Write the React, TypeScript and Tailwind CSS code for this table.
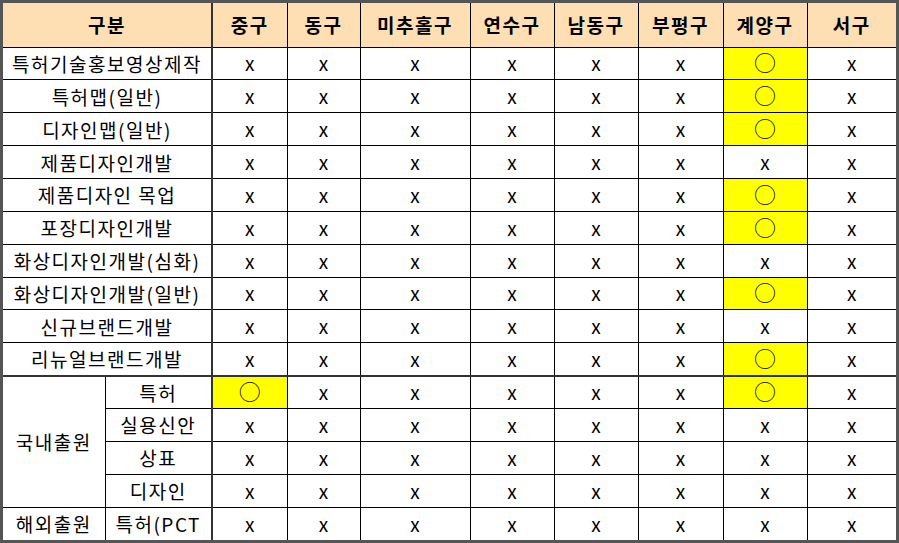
import React from 'react';

type Mark = 'x' | 'o';

const districts = ['중구', '동구', '미추홀구', '연수구', '남동구', '부평구', '계양구', '서구'];

// index 6 = 계양구
const rows: { label: string; marks: Mark[] }[] = [
  { label: '특허기술홍보영상제작', marks: ['x', 'x', 'x', 'x', 'x', 'x', 'o', 'x'] },
  { label: '특허맵(일반)', marks: ['x', 'x', 'x', 'x', 'x', 'x', 'o', 'x'] },
  { label: '디자인맵(일반)', marks: ['x', 'x', 'x', 'x', 'x', 'x', 'o', 'x'] },
  { label: '제품디자인개발', marks: ['x', 'x', 'x', 'x', 'x', 'x', 'x', 'x'] },
  { label: '제품디자인 목업', marks: ['x', 'x', 'x', 'x', 'x', 'x', 'o', 'x'] },
  { label: '포장디자인개발', marks: ['x', 'x', 'x', 'x', 'x', 'x', 'o', 'x'] },
  { label: '화상디자인개발(심화)', marks: ['x', 'x', 'x', 'x', 'x', 'x', 'x', 'x'] },
  { label: '화상디자인개발(일반)', marks: ['x', 'x', 'x', 'x', 'x', 'x', 'o', 'x'] },
  { label: '신규브랜드개발', marks: ['x', 'x', 'x', 'x', 'x', 'x', 'x', 'x'] },
  { label: '리뉴얼브랜드개발', marks: ['x', 'x', 'x', 'x', 'x', 'x', 'o', 'x'] },
];

const filing: { group?: string; span?: number; label: string; marks: Mark[] }[] = [
  { group: '국내출원', span: 4, label: '특허', marks: ['o', 'x', 'x', 'x', 'x', 'x', 'o', 'x'] },
  { label: '실용신안', marks: ['x', 'x', 'x', 'x', 'x', 'x', 'x', 'x'] },
  { label: '상표', marks: ['x', 'x', 'x', 'x', 'x', 'x', 'x', 'x'] },
  { label: '디자인', marks: ['x', 'x', 'x', 'x', 'x', 'x', 'x', 'x'] },
  { group: '해외출원', span: 1, label: '특허(PCT', marks: ['x', 'x', 'x', 'x', 'x', 'x', 'x', 'x'] },
];

function MarkCell({ mark, first }: { mark: Mark; first?: boolean }) {
  const edge = first ? 'border-l-2 border-l-[#333]' : '';
  if (mark === 'o') {
    return (
      <td className={`border border-black bg-[#ffff00] text-center align-middle p-0 ${edge}`}>
        <span className="text-[22px] leading-none font-light">○</span>
      </td>
    );
  }
  return (
    <td className={`border border-black text-center align-bottom p-0 pb-[3px] ${edge}`}>
      <span className="text-[19px] leading-none">x</span>
    </td>
  );
}

const label = 'border border-black text-center text-[19px] tracking-[1.5px] leading-none p-0 whitespace-nowrap overflow-hidden';

export default function App() {
  return (
    <div className="w-[899px] h-[543px] bg-white">
      <div
        className="w-[899px] h-[543px] border-[3px] border-[#555] bg-white text-black"
        style={{ fontFamily: '"Noto Sans CJK KR", "Noto Sans", sans-serif' }}
      >
        <table className="w-full h-full table-fixed border-collapse border-hidden">
          <colgroup>
            <col className="w-[102px]" />
            <col className="w-[107px]" />
            <col className="w-[75px]" />
            <col className="w-[73px]" />
            <col className="w-[110px]" />
            <col className="w-[84px]" />
            <col className="w-[84px]" />
            <col className="w-[85px]" />
            <col className="w-[84px]" />
            <col className="w-[89px]" />
          </colgroup>
          <thead>
            <tr className="h-[44px] bg-[#fedfb4]">
              <th colSpan={2} className="border border-black text-[19px] tracking-[1.5px] font-bold text-center p-0">
                구분
              </th>
              {districts.map((d, i) => (
                <th
                  key={d}
                  className={`border border-black text-[19px] tracking-[1.5px] font-bold text-center p-0 ${i === 0 ? 'border-l-2 border-l-[#333]' : ''}`}
                >
                  {d}
                </th>
              ))}
            </tr>
          </thead>
          <tbody>
            {rows.map((r) => (
              <tr key={r.label} className="h-[32.8px]">
                <td colSpan={2} className={label}>
                  {r.label}
                </td>
                {r.marks.map((m, i) => (
                  <MarkCell key={i} mark={m} first={i === 0} />
                ))}
              </tr>
            ))}
            {filing.map((r, idx) => (
              <tr
                key={r.label}
                className={`h-[32.8px] ${idx === 0 ? '[&>td]:border-t-2 [&>td]:border-t-[#333]' : ''}`}
              >
                {r.group && (
                  <td rowSpan={r.span} className={label}>
                    {r.group}
                  </td>
                )}
                <td className={label}>{r.label}</td>
                {r.marks.map((m, i) => (
                  <MarkCell key={i} mark={m} first={i === 0} />
                ))}
              </tr>
            ))}
          </tbody>
        </table>
      </div>
    </div>
  );
}
